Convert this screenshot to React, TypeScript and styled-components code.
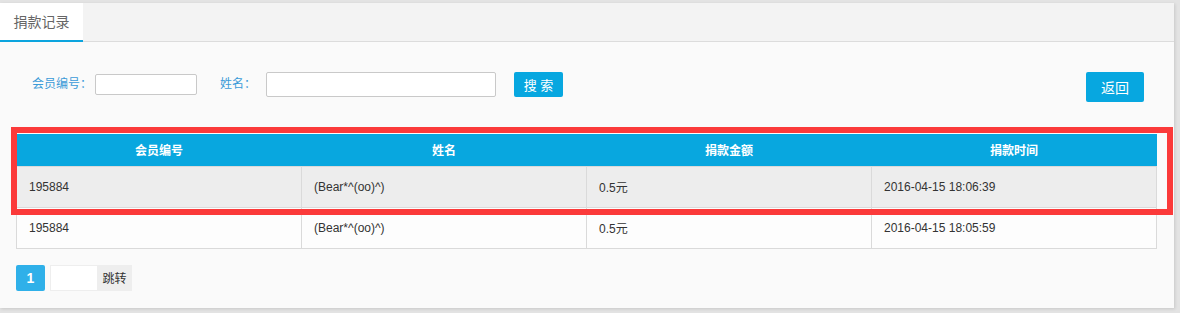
import React from "react";
import styled, { createGlobalStyle } from "styled-components";

const Global = createGlobalStyle`
  html, body { margin: 0; padding: 0; background: #e3e3e3; }
  body { font-family: "Liberation Sans", "Noto Sans CJK SC", sans-serif; }
  * { box-sizing: border-box; }
`;

const Page = styled.div`
  width: 1180px;
  height: 313px;
  padding-top: 3px;
  background: #e3e3e3;
  overflow: hidden;
`;

const Panel = styled.div`
  width: 1174px;
  height: 305px;
  background: #fafafa;
  box-shadow: 1px 1px 3px rgba(0, 0, 0, 0.12);
  display: flex;
  flex-direction: column;
`;

const TabBar = styled.div`
  height: 39px;
  background: #f3f3f3;
  border-bottom: 1px solid #dcdcdc;
  display: flex;
`;

const Tab = styled.div`
  width: 83px;
  height: 39px;
  background: #fff;
  border-bottom: 2px solid #0ba4de;
  color: #666;
  font-size: 14px;
  display: flex;
  align-items: center;
  justify-content: center;
  padding-bottom: 1px;
`;

const Body = styled.div`
  padding: 30px 17px 0 16px;
  display: flex;
  flex-direction: column;
`;

const SearchRow = styled.div`
  display: flex;
  align-items: flex-start;
  height: 30px;
`;

const Label = styled.span<{ $ml: number; $mr: number }>`
  color: #3b9bd8;
  font-size: 12px;
  margin-left: ${(p) => p.$ml}px;
  margin-right: ${(p) => p.$mr}px;
  line-height: 25px;
`;

const Input = styled.input<{ $w: number; $h: number; $mt: number }>`
  width: ${(p) => p.$w}px;
  height: ${(p) => p.$h}px;
  margin-top: ${(p) => p.$mt}px;
  border: 1px solid #c9c9c9;
  border-radius: 2px;
  background: #fff;
  padding: 0 4px;
  outline: none;
`;

const BlueButton = styled.button<{ $w: number; $h: number; $fs: number; $ml?: number; $mr?: number }>`
  width: ${(p) => p.$w}px;
  height: ${(p) => p.$h}px;
  margin-left: ${(p) => p.$ml ?? 0}px;
  margin-right: ${(p) => p.$mr ?? 0}px;
  background: #07a7e0;
  color: #fff;
  border: none;
  border-radius: 2px;
  font-family: "Liberation Sans", "Noto Sans CJK SC", sans-serif;
  font-size: ${(p) => p.$fs}px;
  padding: 0;
  cursor: pointer;
`;

const Spacer = styled.div`
  flex: 1;
`;

const TableWrap = styled.div`
  position: relative;
  margin-top: 32px;
`;

const Table = styled.table`
  width: 1141px;
  border-collapse: collapse;
  table-layout: fixed;
  font-size: 12px;
`;

const Th = styled.th`
  background: #08a7df;
  color: #fff;
  font-weight: bold;
  height: 32px;
  text-align: center;
  padding: 0;
  border: none;
`;

const Tr = styled.tr<{ $hover?: boolean }>`
  background: ${(p) => (p.$hover ? "#ededed" : "#fdfdfd")};
`;

const Td = styled.td`
  height: 41px;
  border: 1px solid #dadada;
  color: #333;
  padding: 0 12px;
`;

const Highlight = styled.div`
  position: absolute;
  left: -5px;
  top: -7px;
  width: 1162px;
  height: 88px;
  border: 6px solid #fb3a3a;
  pointer-events: none;
`;

const Pager = styled.div`
  display: flex;
  margin-top: 16px;
  height: 26px;
`;

const PageNum = styled.span`
  width: 29px;
  height: 26px;
  background: #2fb0e9;
  color: #fff;
  font-weight: bold;
  font-size: 14px;
  display: flex;
  align-items: center;
  justify-content: center;
  border-radius: 2px;
  margin-right: 5px;
`;

const JumpInput = styled.input`
  width: 47px;
  height: 26px;
  border: 1px solid #eee;
  border-right: none;
  background: #fff;
  outline: none;
`;

const JumpButton = styled.span`
  width: 35px;
  height: 26px;
  background: #eeeeee;
  color: #333;
  font-size: 12px;
  display: flex;
  align-items: center;
  justify-content: center;
`;

const rows = [
  { id: "195884", name: "(Bear*^(oo)^)", amount: "0.5元", time: "2016-04-15 18:06:39", hover: true },
  { id: "195884", name: "(Bear*^(oo)^)", amount: "0.5元", time: "2016-04-15 18:05:59", hover: false },
];

export default function App() {
  return (
    <>
      <Global />
      <Page>
        <Panel>
          <TabBar>
            <Tab>捐款记录</Tab>
          </TabBar>
          <Body>
            <SearchRow>
              <Label $ml={16} $mr={3}>会员编号：</Label>
              <Input $w={102} $h={21} $mt={2} />
              <Label $ml={23} $mr={10}>姓名：</Label>
              <Input $w={230} $h={25} $mt={0} />
              <BlueButton $w={49} $h={25} $fs={13} $ml={18}>搜 索</BlueButton>
              <Spacer />
              <BlueButton $w={58} $h={30} $fs={14} $mr={13}>返回</BlueButton>
            </SearchRow>
            <TableWrap>
              <Table>
                <thead>
                  <tr>
                    <Th>会员编号</Th>
                    <Th>姓名</Th>
                    <Th>捐款金额</Th>
                    <Th>捐款时间</Th>
                  </tr>
                </thead>
                <tbody>
                  {rows.map((r, i) => (
                    <Tr key={i} $hover={r.hover}>
                      <Td>{r.id}</Td>
                      <Td>{r.name}</Td>
                      <Td>{r.amount}</Td>
                      <Td>{r.time}</Td>
                    </Tr>
                  ))}
                </tbody>
              </Table>
              <Highlight />
            </TableWrap>
            <Pager>
              <PageNum>1</PageNum>
              <JumpInput />
              <JumpButton>跳转</JumpButton>
            </Pager>
          </Body>
        </Panel>
      </Page>
    </>
  );
}
